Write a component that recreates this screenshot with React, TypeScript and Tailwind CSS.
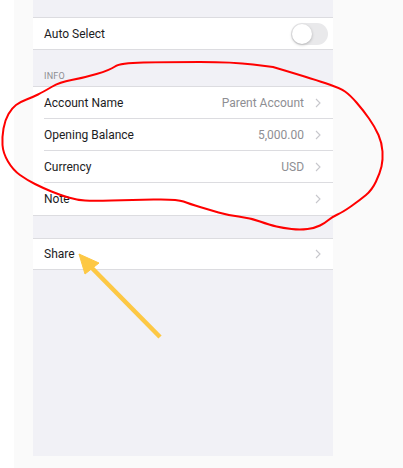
import React from "react";

const Chevron = () => (
  <svg width="6" height="10" viewBox="0 0 6 10" className="ml-[11px] shrink-0">
    <path d="M1 1 L5 5 L1 9" fill="none" stroke="#c7c7cc" strokeWidth="1.1" />
  </svg>
);

const Row = ({ label, value, last }: { label: string; value?: string; last?: boolean }) => (
  <div className="pl-[11px] bg-white">
    <div
      className={
        "h-[32px] flex items-center pr-[12px] " + (last ? "" : "border-b border-[#dcdce0]")
      }
    >
      <span className="flex-1 text-[12px] text-[#1c1c1e]">{label}</span>
      {value && <span className="text-[12px] text-[#8e8e93]">{value}</span>}
      <Chevron />
    </div>
  </div>
);

const redPts: [number, number][] = [
  [273, 67], [310, 78], [340, 88], [350, 95], [363, 110], [375, 127], [382, 143], [383, 160],
  [380, 173], [372, 190], [360, 200], [343, 212], [332, 217], [325, 223], [315, 228], [300, 230],
  [283, 228], [270, 225], [250, 218], [227, 215], [210, 210], [190, 204], [177, 199], [130, 200],
  [93, 201], [77, 200], [60, 195], [43, 188], [27, 180], [13, 170], [3, 153], [2, 137], [5, 120],
  [12, 108], [20, 102], [33, 97], [43, 92], [60, 82], [83, 78], [110, 70], [120, 63], [167, 62],
  [233, 62], [273, 67],
];

function smoothPath(pts: [number, number][]) {
  let d = `M${pts[0][0]} ${pts[0][1]}`;
  for (let i = 1; i < pts.length - 1; i++) {
    const [x, y] = pts[i];
    const [nx, ny] = pts[i + 1];
    d += ` Q${x} ${y} ${(x + nx) / 2} ${(y + ny) / 2}`;
  }
  const l = pts[pts.length - 1];
  d += ` L${l[0]} ${l[1]}`;
  return d;
}

export default function App() {
  return (
    <div
      className="relative w-[403px] h-[468px] bg-white flex overflow-hidden"
      style={{ fontFamily: "Roboto, 'Liberation Sans', sans-serif" }}
    >
      <div className="ml-[14px] flex-1 bg-[#fafafa]">
        <div className="ml-[19px] w-[300px] h-[456px] bg-[#f1f1f6] flex flex-col">
          <div className="h-[17px]" />
          <div className="bg-white border-y border-[#dcdce0] h-[33px] flex items-center pl-[11px] pr-[5px]">
            <span className="flex-1 text-[12px] text-[#1c1c1e]">Auto Select</span>
            <div className="w-[37px] h-[22px] rounded-full bg-[#e9e9eb] p-[1px] flex items-center">
              <div className="w-[20px] h-[20px] rounded-full bg-white shadow-[0_1px_3px_rgba(0,0,0,0.25)]" />
            </div>
          </div>
          <div className="h-[36px] flex items-end pl-[11px] pb-[4px]">
            <span className="text-[9px] leading-[11px] text-[#8e8e93] tracking-[0.2px]">INFO</span>
          </div>
          <div className="border-y border-[#dcdce0]">
            <Row label="Account Name" value="Parent Account" />
            <Row label="Opening Balance" value="5,000.00" />
            <Row label="Currency" value="USD" />
            <Row label="Note" last />
          </div>
          <div className="h-[22px]" />
          <div className="border-y border-[#dcdce0]">
            <div className="pl-[11px] bg-white">
              <div className="h-[30px] flex items-center pr-[12px]">
                <span className="flex-1 text-[12px] text-[#1c1c1e]">Share</span>
                <Chevron />
              </div>
            </div>
          </div>
        </div>
      </div>
      <svg className="absolute inset-0 pointer-events-none" width="403" height="468" viewBox="0 0 403 468">
        <path
          d={smoothPath(redPts)}
          fill="none"
          stroke="#ff0000"
          strokeWidth="2"
          strokeLinejoin="round"
          strokeLinecap="round"
        />
        <line x1="160" y1="337" x2="90" y2="266" stroke="#fdc844" strokeWidth="4.5" />
        <polygon points="79,254 99,263 85,274" fill="#fdc844" stroke="#fdc844" strokeWidth="1" strokeLinejoin="round" />
      </svg>
    </div>
  );
}
